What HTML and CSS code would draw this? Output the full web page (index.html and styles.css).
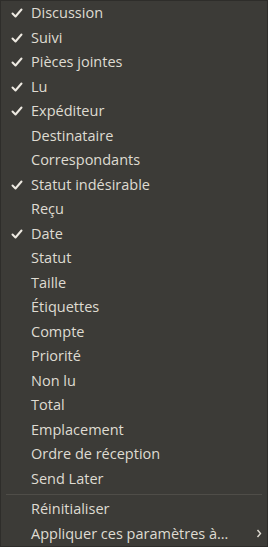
FILE: index.html
```html
<!DOCTYPE html>
<html lang="fr">
<head>
<meta charset="utf-8">
<link rel="stylesheet" href="styles.css">
</head>
<body>
<div class="menu">
  <div class="item checked"><span class="check"><svg viewBox="0 0 12 12" width="12" height="12"><path d="M1.5 6.5 L4.5 9.5 L10.5 2.5" fill="none" stroke="currentColor" stroke-width="2" stroke-linecap="round" stroke-linejoin="round"/></svg></span><span class="label">Discussion</span></div>
  <div class="item checked"><span class="check"><svg viewBox="0 0 12 12" width="12" height="12"><path d="M1.5 6.5 L4.5 9.5 L10.5 2.5" fill="none" stroke="currentColor" stroke-width="2" stroke-linecap="round" stroke-linejoin="round"/></svg></span><span class="label">Suivi</span></div>
  <div class="item checked"><span class="check"><svg viewBox="0 0 12 12" width="12" height="12"><path d="M1.5 6.5 L4.5 9.5 L10.5 2.5" fill="none" stroke="currentColor" stroke-width="2" stroke-linecap="round" stroke-linejoin="round"/></svg></span><span class="label">Pièces jointes</span></div>
  <div class="item checked"><span class="check"><svg viewBox="0 0 12 12" width="12" height="12"><path d="M1.5 6.5 L4.5 9.5 L10.5 2.5" fill="none" stroke="currentColor" stroke-width="2" stroke-linecap="round" stroke-linejoin="round"/></svg></span><span class="label">Lu</span></div>
  <div class="item checked"><span class="check"><svg viewBox="0 0 12 12" width="12" height="12"><path d="M1.5 6.5 L4.5 9.5 L10.5 2.5" fill="none" stroke="currentColor" stroke-width="2" stroke-linecap="round" stroke-linejoin="round"/></svg></span><span class="label">Expéditeur</span></div>
  <div class="item"><span class="check"></span><span class="label">Destinataire</span></div>
  <div class="item"><span class="check"></span><span class="label">Correspondants</span></div>
  <div class="item checked"><span class="check"><svg viewBox="0 0 12 12" width="12" height="12"><path d="M1.5 6.5 L4.5 9.5 L10.5 2.5" fill="none" stroke="currentColor" stroke-width="2" stroke-linecap="round" stroke-linejoin="round"/></svg></span><span class="label">Statut indésirable</span></div>
  <div class="item"><span class="check"></span><span class="label">Reçu</span></div>
  <div class="item checked"><span class="check"><svg viewBox="0 0 12 12" width="12" height="12"><path d="M1.5 6.5 L4.5 9.5 L10.5 2.5" fill="none" stroke="currentColor" stroke-width="2" stroke-linecap="round" stroke-linejoin="round"/></svg></span><span class="label">Date</span></div>
  <div class="item"><span class="check"></span><span class="label">Statut</span></div>
  <div class="item"><span class="check"></span><span class="label">Taille</span></div>
  <div class="item"><span class="check"></span><span class="label">Étiquettes</span></div>
  <div class="item"><span class="check"></span><span class="label">Compte</span></div>
  <div class="item"><span class="check"></span><span class="label">Priorité</span></div>
  <div class="item"><span class="check"></span><span class="label">Non lu</span></div>
  <div class="item"><span class="check"></span><span class="label">Total</span></div>
  <div class="item"><span class="check"></span><span class="label">Emplacement</span></div>
  <div class="item"><span class="check"></span><span class="label">Ordre de réception</span></div>
  <div class="item"><span class="check"></span><span class="label">Send Later</span></div>
  <div class="separator"></div>
  <div class="item"><span class="check"></span><span class="label">Réinitialiser</span></div>
  <div class="item"><span class="check"></span><span class="label">Appliquer ces paramètres à…</span><span class="arrow"><svg viewBox="0 0 6 9" width="6" height="9"><path d="M1.5 1 L4.5 4.5 L1.5 8" fill="none" stroke="currentColor" stroke-width="1.4"/></svg></span></div>
</div>
</body>
</html>
```
FILE: styles.css
```css
html, body {
  margin: 0;
  padding: 0;
  background: #3c3b37;
}
.menu {
  width: 268px;
  height: 547px;
  box-sizing: border-box;
  border: 1px solid #2e2d2a;
  background: #3c3b37;
  color: #dfdbd2;
  font-family: "Open Sans", "DejaVu Sans", sans-serif;
  font-size: 14.5px;
  display: flex;
  flex-direction: column;
}
.item {
  height: 24.5px;
  display: flex;
  align-items: center;
  flex: none;
}
.check {
  width: 30px;
  display: flex;
  justify-content: flex-start;
  padding-left: 10px;
  box-sizing: border-box;
  flex: none;
  color: #eeeae2;
}
.check svg {
  display: block;
}
.label {
  flex: 1;
  white-space: nowrap;
  line-height: 1;
}
.arrow {
  width: 11px;
  flex: none;
  display: flex;
  color: #dfdbd2;
}
.separator {
  height: 6px;
  flex: none;
  display: flex;
  align-items: center;
  padding: 0 5px;
}
.separator::before {
  content: "";
  display: block;
  width: 100%;
  height: 1px;
  background: #4f4d48;
}
```
